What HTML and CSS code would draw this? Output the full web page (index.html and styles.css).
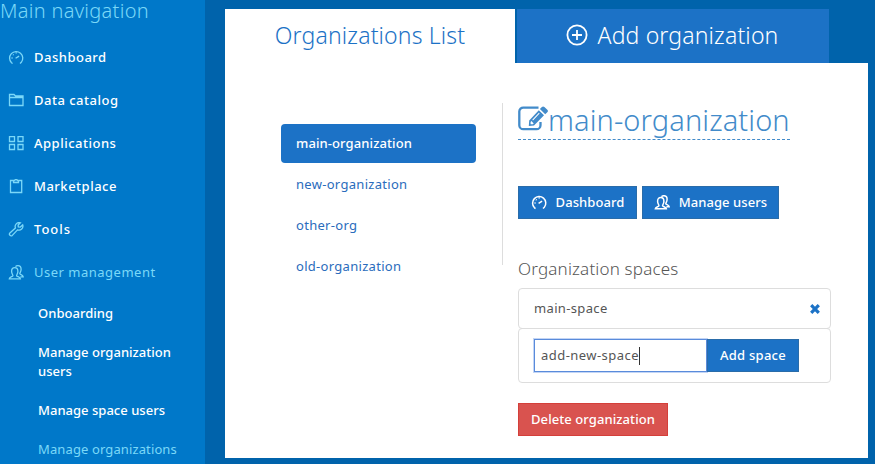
FILE: index.html
```html
<!DOCTYPE html>
<html lang="en">
<head>
<meta charset="utf-8">
<title>Manage organizations</title>
<link rel="stylesheet" href="styles.css">
</head>
<body>
<svg class="defs" aria-hidden="true">
  <symbol id="gauge" viewBox="0 0 16 16"><path d="M4.600 13.500 3.500 12.800A6.600 6.600 0 1 1 13.300 12.300l-1.300 1.200M7.600 8.300l3.500-2.200M3.500 8h1.100M5 4.500l.6.600M8.200 2.500v1"/></symbol>
  <symbol id="folder" viewBox="0 0 16 16"><path d="M1.500 12.500V1.500h4.500l1.500 1.500h7.500v9.500zM1.500 4.500h13.500"/></symbol>
  <symbol id="grid" viewBox="0 0 16 16"><path d="M1.500 .7h5v4.800h-5zM10 .7h5v4.800h-5zM1.500 8.500h5v5h-5zM10 8.500h5v5h-5z"/></symbol>
  <symbol id="bag" viewBox="0 0 16 16"><path d="M5 1.500H2.500v12h11.200v-12H11M5.500 3.500V1.500h1.300a1.200 1.200 0 0 1 2.400 0h1.300v2z"/></symbol>
  <symbol id="wrench" viewBox="0 0 16 16"><path d="M12.400 .8a4 4 0 0 0-5 5.200L1.900 11a1.700 1.700 0 0 0 2.400 2.400l5.200-5.500a4 4 0 0 0 5.200-5L12.300 5.100l-2-.2-.2-2z"/></symbol>
  <symbol id="users" viewBox="0 0 16 16"><path d="M1.300 13.800c.2-2 3.300-2 3.600-3 .2-.9-1.300-2-1.300-4.600C3.600 3.700 4.800 2.600 6.700 2.600S9.900 3.700 9.900 6.200c0 2.600-1.500 3.700-1.300 4.600.3 1 3.600 1 3.800 3zM7.500 1.600C8 .9 9 .7 9.900 .7c2 0 3.200 1.300 3.200 3.600 0 2.700-1.500 3.600-1.300 4.500.3.900 3.200 1 3.400 3h-2.800"/></symbol>
</svg>
<div class="app">
  <nav class="sidebar">
    <h2 class="nav-title"><span>Main navigation</span></h2>
    <ul class="nav">
      <li><svg class="icon"><use href="#gauge"/></svg><span>Dashboard</span></li>
      <li><svg class="icon"><use href="#folder"/></svg><span>Data catalog</span></li>
      <li><svg class="icon"><use href="#grid"/></svg><span>Applications</span></li>
      <li><svg class="icon"><use href="#bag"/></svg><span>Marketplace</span></li>
      <li><svg class="icon"><use href="#wrench"/></svg><span class="wide">Tools</span></li>
      <li class="current"><svg class="icon"><use href="#users"/></svg><span>User management</span></li>
    </ul>
    <ul class="subnav">
      <li>Onboarding</li>
      <li>Manage organization users</li>
      <li>Manage space users</li>
      <li class="current">Manage organizations</li>
    </ul>
  </nav>
  <main class="content">
    <div class="tabs">
      <div class="tab active"><span>Organizations List</span></div>
      <div class="tab"><svg class="plus" viewBox="0 0 22 22"><circle cx="11" cy="11" r="9.600"/><path d="M11 6v10M6 11h10"/></svg><span>Add organization</span></div>
    </div>
    <div class="panel">
      <ul class="orgs">
        <li class="selected">main-organization</li>
        <li>new-organization</li>
        <li>other-org</li>
        <li>old-organization</li>
      </ul>
      <div class="divider"></div>
      <section class="detail">
        <h1 class="org-name"><svg class="edit" viewBox="0 0 30 26"><path class="frame" d="M20.500 2.600H5.500A4 4 0 0 0 1.300 6.600v13.600a4 4 0 0 0 4 4h13.200a4 4 0 0 0 4-4V17"/><path class="pencil" fill-rule="evenodd" d="M20.800 5.200 26 10.200 16 20.600 10.800 21.100 11.200 15.400zM12.600 16.900v2.400h2.300l.8-.8-2.300-2.400zM14.300 14.700l.7.700 6.600-7-.7-.7zM21.900 4.100l2-2c.8-.8 1.700-.7 2.500 0l2.900 2.700c.8.800.8 1.700 0 2.500L27.200 9.200z"/></svg><span>main-organization</span></h1>
        <div class="actions">
          <button class="btn"><svg class="icon"><use href="#gauge"/></svg><span>Dashboard</span></button>
          <button class="btn"><svg class="icon"><use href="#users"/></svg><span>Manage users</span></button>
        </div>
        <h3 class="spaces-title"><span>Organization spaces</span></h3>
        <div class="space"><span>main-space</span><svg class="remove" viewBox="0 0 10 10"><path d="M1.200 1.200l7.600 7.600M8.800 1.200l-7.600 7.600"/></svg></div>
        <div class="space add"><div class="field"><span>add-new-space</span><i class="caret"></i></div><button class="btn add-btn"><span>Add space</span></button></div>
        <button class="btn danger"><span>Delete organization</span></button>
      </section>
    </div>
  </main>
</div>
</body>
</html>
```
FILE: styles.css
```css
* { box-sizing: border-box; }
body { margin: 0; background: #0063ab; font: 13px/19px "Noto Sans", "Open Sans", sans-serif; color: #555; }
ul { list-style: none; margin: 0; padding: 0; }
h1, h2, h3 { margin: 0; font-weight: 300; }
.defs { display: none; }
.app { display: flex; height: 464px; overflow: hidden; }
.sidebar { width: 205px; background: #0078c9; color: #fff; font-size: 13px; font-weight: 500; }
.nav-title { height: 36px; font-size: 20px; line-height: 21px; letter-spacing: .3px; color: #7bd8f8; white-space: nowrap; }
.nav li { display: flex; align-items: center; height: 43px; padding-left: 8px; gap: 10px; letter-spacing: .5px; }
.nav .wide { letter-spacing: 1px; }
.icon { width: 16px; height: 16px; flex: none; fill: none; stroke: #7bd8f8; stroke-width: 1.3; }
.sidebar .current { color: #7bd8f8; font-weight: 400; }
.subnav li { padding: 10px 20px 10px 38px; letter-spacing: .02px; }
.subnav .current { letter-spacing: .12px; }
.content { width: 643px; margin: 9px 0 0 20px; }
.tabs { display: flex; gap: 2px; height: 54px; }
.tab { display: flex; align-items: center; justify-content: center; gap: 10px; width: 312px; padding: 0 2px 2px 0; background: #1c72c6; color: #fff; font-size: 23px; font-weight: 300; letter-spacing: .15px; white-space: nowrap; }
.tab.active { width: 290px; padding-right: 0; background: #fff; color: #1c72c6; }
.plus { width: 22px; height: 22px; fill: none; stroke: #fff; stroke-width: 1.8; }
.panel { display: flex; height: 395px; background: #fff; padding: 40px 37px 0 56px; }
.orgs { width: 195px; margin-top: 21px; color: #2a6cbc; letter-spacing: .3px; }
.orgs li { height: 39px; margin-bottom: 2px; padding: 10px 15px; border-radius: 4px; }
.orgs .selected { background: #1c72c6; color: #fff; font-weight: 500; letter-spacing: .1px; }
.divider { width: 1px; height: 162px; margin: 0 15px 0 26px; background: #ddd; }
.detail { flex: 1; }
.org-name { display: flex; width: 272px; height: 37px; border-bottom: 1px dashed #428bca; color: #428bca; font-size: 29px; line-height: 34px; letter-spacing: .1px; white-space: nowrap; }
.edit { width: 30px; height: 26px; flex: none; margin-top: 2px; }
.frame { fill: none; stroke: #428bca; stroke-width: 2.3; }
.pencil { fill: #428bca; }
.actions { display: flex; gap: 5px; margin-top: 46px; }
.btn { display: flex; align-items: center; justify-content: center; gap: 9px; width: 119px; height: 33px; padding: 0; border: 1px solid #2a6ca9; background: #1c72c6; color: #fff; font: 500 13px/19px "Noto Sans", "Open Sans", sans-serif; letter-spacing: .08px; white-space: nowrap; }
.btn + .btn { width: 137px; }
.btn .icon { stroke: #fff; stroke-width: 1.5; }
.spaces-title { height: 19px; margin: 40px 0 10px; font-size: 17px; letter-spacing: .18px; white-space: nowrap; }
.space { display: flex; justify-content: space-between; align-items: center; width: 313px; height: 41px; padding: 0 10px 0 15px; border: 1px solid #ddd; border-radius: 4px; letter-spacing: .35px; }
.remove { width: 10px; height: 10px; stroke: #1c72c6; stroke-width: 3.2; }
.space.add { justify-content: flex-start; height: 55px; margin-top: -1px; padding-left: 15px; }
.field { display: flex; align-items: center; width: 173px; height: 33px; padding-left: 6px; border: 1px solid #5a8bdb; box-shadow: 0 0 0 1px #c3d5f5; letter-spacing: .45px; white-space: nowrap; }
.caret { width: 1px; height: 18px; background: #333; }
.btn.add-btn { width: 92px; letter-spacing: .25px; }
.btn.danger { width: 150px; margin-top: 20px; border-color: #d43f3a; background: #d9534f; }
```
